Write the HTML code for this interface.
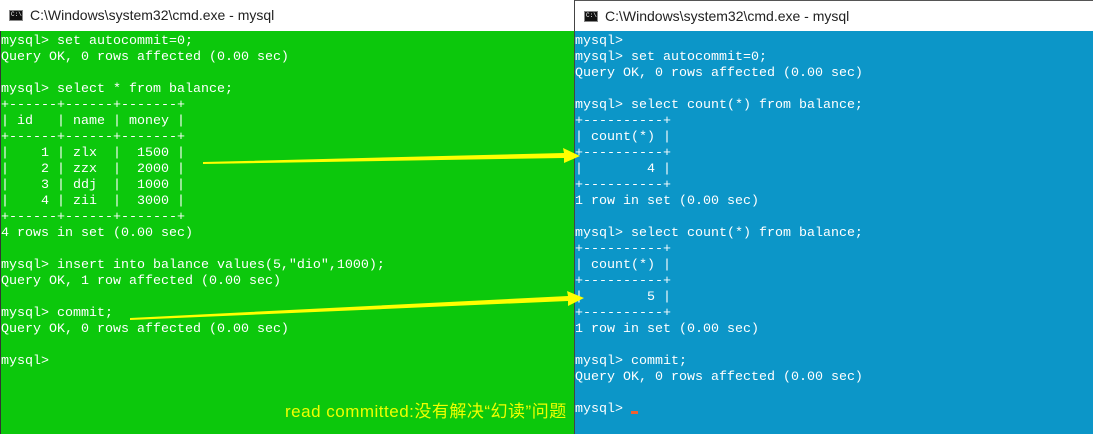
<!DOCTYPE html>
<html><head><meta charset="utf-8"><style>
body{margin:0;width:1093px;height:434px;overflow:hidden;position:relative;background:#fff;font-family:"Liberation Sans",sans-serif}
.win{position:absolute;top:0;height:434px}
.title{height:31px;background:#fff;position:relative;font-size:14px;color:#222}
.title span{position:absolute;left:30px;top:7px}
.ico{position:absolute;left:9px;top:10px;width:14px;height:11px;background:#111;border:1px solid #888;box-sizing:border-box}
.ico:after{content:"C:\\";color:#fff;font-size:6px;position:absolute;left:1px;top:1px;line-height:6px;font-family:"Liberation Mono",monospace}
pre{margin:0;position:absolute;top:31px;left:0;right:0;bottom:0;padding-top:3px;font-family:"Liberation Mono",monospace;font-size:13.33px;line-height:16px;color:#fff}
</style></head><body>
<div class="win" style="left:0;width:575px">
<div class="title"><div class="ico"></div><span>C:\Windows\system32\cmd.exe - mysql</span></div>
<pre style="background:#0cc80c;border-left:1px solid #333">mysql&gt; set autocommit=0;
Query OK, 0 rows affected (0.00 sec)

mysql&gt; select * from balance;
+------+------+-------+
| id   | name | money |
+------+------+-------+
|    1 | zlx  |  1500 |
|    2 | zzx  |  2000 |
|    3 | ddj  |  1000 |
|    4 | zii  |  3000 |
+------+------+-------+
4 rows in set (0.00 sec)

mysql&gt; insert into balance values(5,"dio",1000);
Query OK, 1 row affected (0.00 sec)

mysql&gt; commit;
Query OK, 0 rows affected (0.00 sec)

mysql&gt;</pre>
</div>
<div class="win" style="left:574px;width:519px;border-left:1px solid #444">
<div class="title" style="border-top:1px solid #555;box-sizing:border-box"><div class="ico"></div><span>C:\Windows\system32\cmd.exe - mysql</span></div>
<pre style="background:#0c96c8">mysql&gt;
mysql&gt; set autocommit=0;
Query OK, 0 rows affected (0.00 sec)

mysql&gt; select count(*) from balance;
+----------+
| count(*) |
+----------+
|        4 |
+----------+
1 row in set (0.00 sec)

mysql&gt; select count(*) from balance;
+----------+
| count(*) |
+----------+
|        5 |
+----------+
1 row in set (0.00 sec)

mysql&gt; commit;
Query OK, 0 rows affected (0.00 sec)

mysql&gt; <span style="display:inline-block;width:7px;height:3px;background:#f06030;vertical-align:-2px"></span></pre>
</div>
<svg style="position:absolute;left:0;top:0" width="1093" height="434">
<polygon points="203,162 564,153 563,148 580,156 564,163 564,158 203,164" fill="#ffff00"/>
<polygon points="130,318 568,296 567,291 584,298 568,306 568,301 130,320" fill="#ffff00"/>
</svg>
<div style="position:absolute;left:285px;top:397px;color:#eeff00;font-size:17px;letter-spacing:0.5px;font-family:'Liberation Sans','Noto Sans CJK SC',sans-serif">read committed:没有解决“幻读”问题</div>
</body></html>
